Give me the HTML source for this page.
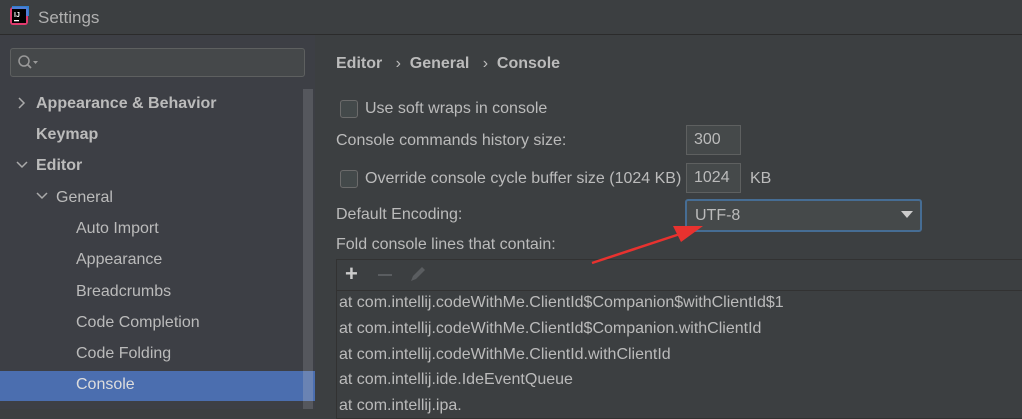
<!DOCTYPE html>
<html><head><style>
*{margin:0;padding:0;box-sizing:border-box}
body{width:1022px;height:409px;overflow:hidden;background:#3c3f41;font-family:"Liberation Sans",sans-serif;color:#bbbbbb;font-size:16px;position:relative}
.a{position:absolute;white-space:nowrap}
.title{left:0;top:0;width:1022px;height:35px;background:#3c3f41;border-bottom:1px solid #2b2b2b}
.side{left:0;top:35px;width:315px;height:374px;background:#3d3f45}
.b{font-weight:bold}
.cb{width:18px;height:18px;border:1px solid #6b6b6b;border-radius:3px;background:#43494a}
.inp{border:1px solid #5e6060;background:#45494a;height:30px;padding:5px 7px}
</style></head><body>
<div class="a title"></div>
<svg class="a" style="left:9px;top:6px" width="20" height="20"><rect x="1" y="1" width="18" height="18" rx="3" fill="#e23b6f"/><rect x="3" y="0" width="17" height="10" fill="#2d8ff0" opacity=".8"/><rect x="3" y="3" width="14" height="14" fill="#000"/><text x="5" y="11" font-size="7" fill="#fff" font-family="Liberation Sans" font-weight="bold">IJ</text><rect x="5" y="14" width="5" height="1.3" fill="#fff"/></svg>
<div class="a" style="left:38px;top:8px;font-size:17px;color:#b0b0b0">Settings</div>
<div class="a side"></div>
<div class="a" style="left:10px;top:48px;width:295px;height:29px;border:1px solid #5e6060;border-radius:3px;background:#45484a"></div>
<svg class="a" style="left:16px;top:54px" width="24" height="18"><circle cx="8" cy="7" r="5" stroke="#999" stroke-width="1.5" fill="none"/><path d="M11.5 10.5 L15 14" stroke="#999" stroke-width="1.8"/><path d="M17 7 L22 7 L19.5 10Z" fill="#999"/></svg>
<div class="a" style="left:303px;top:89px;width:10px;height:320px;background:#55575d"></div>
<div class="a" style="left:0;top:371px;width:315px;height:30px;background:#4b6eaf"></div>
<div class="a" style="left:303px;top:371px;width:10px;height:30px;background:#6a83b3"></div>
<svg class="a" style="left:17px;top:97px" width="10" height="12"><path d="M2 1 L7 6 L2 11" stroke="#aaa" stroke-width="1.5" fill="none"/></svg>
<div class="a b" style="left:36px;top:95px">Appearance &amp; Behavior</div>
<div class="a b" style="left:36px;top:126px">Keymap</div>
<svg class="a" style="left:16px;top:160px" width="12" height="10"><path d="M1 2 L6 7 L11 2" stroke="#aaa" stroke-width="1.5" fill="none"/></svg>
<div class="a b" style="left:36px;top:157px">Editor</div>
<svg class="a" style="left:36px;top:191px" width="12" height="10"><path d="M1 2 L6 7 L11 2" stroke="#aaa" stroke-width="1.5" fill="none"/></svg>
<div class="a" style="left:56px;top:189px">General</div>
<div class="a" style="left:76px;top:220px">Auto Import</div>
<div class="a" style="left:76px;top:251px">Appearance</div>
<div class="a" style="left:76px;top:283px">Breadcrumbs</div>
<div class="a" style="left:76px;top:314px">Code Completion</div>
<div class="a" style="left:76px;top:345px">Code Folding</div>
<div class="a" style="left:76px;top:376px;color:#ddd">Console</div>

<div class="a b" style="left:336px;top:55px">Editor&nbsp;&nbsp; <span style="font-weight:normal">›</span> &nbsp;General&nbsp;&nbsp; <span style="font-weight:normal">›</span> &nbsp;Console</div>
<div class="a cb" style="left:340px;top:100px"></div>
<div class="a" style="left:365px;top:100px">Use soft wraps in console</div>
<div class="a" style="left:336px;top:132px">Console commands history size:</div>
<div class="a inp" style="left:686px;top:125px;width:55px">300</div>
<div class="a cb" style="left:340px;top:170px"></div>
<div class="a" style="left:365px;top:170px">Override console cycle buffer size (1024 KB)</div>
<div class="a inp" style="left:686px;top:163px;width:55px">1024</div>
<div class="a" style="left:750px;top:170px">KB</div>
<div class="a" style="left:336px;top:206px">Default Encoding:</div>
<div class="a" style="left:685px;top:199px;width:237px;height:33px;border:2px solid #466d94;border-radius:3px;background:#45494a;padding:6px 8px">UTF-8</div>
<svg class="a" style="left:900px;top:210px" width="14" height="10"><path d="M1 1 L13 1 L7 8Z" fill="#ccc"/></svg>
<div class="a" style="left:336px;top:236px">Fold console lines that contain:</div>
<div class="a" style="left:336px;top:259px;width:700px;height:160px;border:1px solid #323232;background:#3c3f41"></div>
<div class="a" style="left:337px;top:290px;width:700px;height:1px;background:#323232"></div>
<div class="a" style="left:345px;top:261px;font-size:22px;color:#ccc;font-weight:bold">+</div>
<div class="a" style="left:378px;top:274px;width:14px;height:2px;background:#5a5d60"></div>
<svg class="a" style="left:408px;top:265px" width="20" height="18"><path d="M3 16 L5 11 L14 2 L17 5 L8 14Z" fill="#5a5d60"/></svg>
<div class="a" style="left:339px;top:294px">at com.intellij.codeWithMe.ClientId$Companion$withClientId$1</div>
<div class="a" style="left:339px;top:320px">at com.intellij.codeWithMe.ClientId$Companion.withClientId</div>
<div class="a" style="left:339px;top:346px">at com.intellij.codeWithMe.ClientId.withClientId</div>
<div class="a" style="left:339px;top:371px">at com.intellij.ide.IdeEventQueue</div>
<div class="a" style="left:339px;top:397px">at com.intellij.ipa.</div>
<svg class="a" style="left:585px;top:220px" width="120" height="50"><path d="M7 43 L95 14" stroke="#e8322f" stroke-width="2.5"/><path d="M118 6 L88 6 L96 22Z" fill="#e8322f"/></svg>
</body></html>
